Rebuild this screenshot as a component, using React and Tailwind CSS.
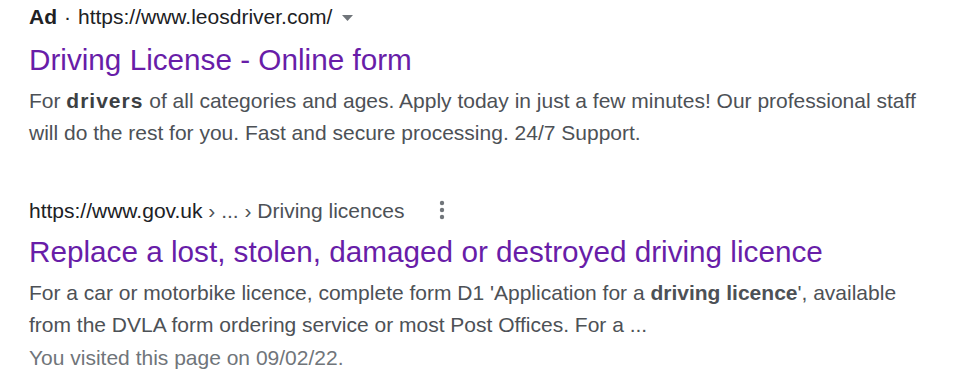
import React from "react";

const font = { fontFamily: '"Liberation Sans", Arial, sans-serif' };

function Caret() {
  return (
    <svg width="11" height="6" viewBox="0 0 11 6" className="ml-[10px] mt-[1px]">
      <path d="M0 0h11L5.5 6z" fill="#70757a" />
    </svg>
  );
}

function Dots() {
  return (
    <svg width="6" height="20" viewBox="0 0 6 20" className="ml-[35px] -mt-[3px]">
      <circle cx="3" cy="3" r="2.2" fill="#70757a" />
      <circle cx="3" cy="10" r="2.2" fill="#70757a" />
      <circle cx="3" cy="17" r="2.2" fill="#70757a" />
    </svg>
  );
}

export default function App() {
  return (
    <div className="w-[967px] h-[372px] bg-white overflow-hidden pl-[29px] pt-[4px]" style={font}>
      {/* ad */}
      <div className="flex items-center h-[26px] text-[21px] text-[#202124]">
        <span className="font-bold">Ad</span>
        <span className="mx-[7px]">·</span>
        <span>https://www.leosdriver.com/</span>
        <Caret />
      </div>
      <div className="mt-[12px] h-[36px] leading-[36px] text-[29.7px] text-[#681da8]">
        Driving License - Online form
      </div>
      <p className="mt-[7px] text-[21px] leading-[32px] text-[#4d5156] w-[910px]">
        For <b className="font-bold text-[#3c4043] tracking-[1px]">drivers</b> of all categories and ages. Apply today in just a few minutes! Our professional staff will do the rest for you. Fast and secure processing. 24/7 Support.
      </p>

      {/* organic */}
      <div className="mt-[49px] flex items-center h-[26px] text-[21px]">
        <span className="text-[#202124]">https://www.gov.uk</span>
        <span className="text-[#4d5156]">&nbsp;› ... › Driving licences</span>
        <Dots />
      </div>
      <div className="mt-[10px] h-[36px] leading-[36px] text-[29.7px] text-[#681da8]">
        Replace a lost, stolen, damaged or destroyed driving licence
      </div>
      <p className="mt-[7px] text-[21px] leading-[32px] text-[#4d5156] w-[910px]">
        For a car or motorbike licence, complete form D1 'Application for a <b className="font-bold">driving licence</b>', available from the DVLA form ordering service or most Post Offices. For a ...
      </p>
      <div className="mt-[1px] text-[21px] leading-[32px] text-[#70757a]">
        You visited this page on 09/02/22.
      </div>
    </div>
  );
}
